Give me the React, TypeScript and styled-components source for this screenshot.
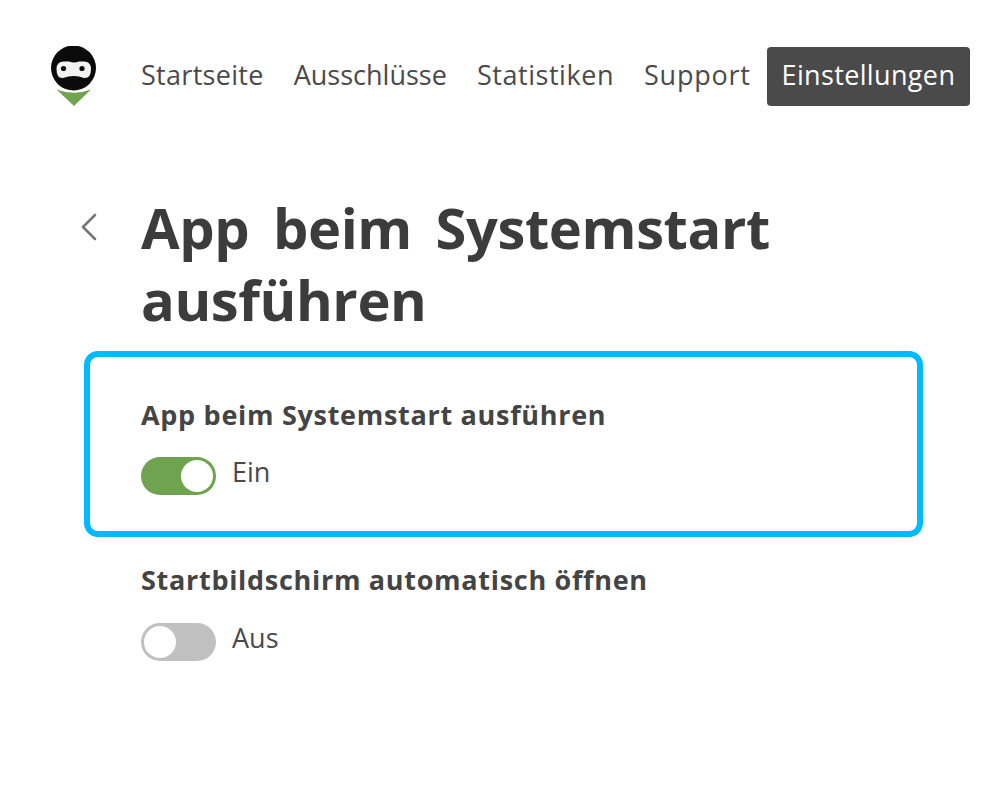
import React from "react";
import styled, { createGlobalStyle } from "styled-components";

const GlobalStyle = createGlobalStyle`
  html, body {
    margin: 0;
    padding: 0;
    background: #fff;
  }
  body {
    font-family: "Open Sans", "Noto Sans", sans-serif;
    color: #444;
  }
`;

const Page = styled.div`
  width: 1008px;
  height: 791px;
  overflow: hidden;
  box-sizing: border-box;
  padding: 46px 0 0 50px;
`;

const Header = styled.header`
  display: flex;
  align-items: center;
  height: 60px;
`;

const LogoSlot = styled.div`
  width: 48px;
  height: 60px;
  margin-right: 43px;
  flex-shrink: 0;
`;

const Nav = styled.nav`
  display: flex;
  align-items: center;
  gap: 30px;
`;

const NavLink = styled.a<{ $active?: boolean; $tracking: number }>`
  font-size: 27px;
  letter-spacing: ${(p) => p.$tracking}px;
  line-height: 56px;
  height: 59px;
  white-space: nowrap;
  color: ${(p) => (p.$active ? "#fff" : "#4a4a4a")};
  background: ${(p) => (p.$active ? "#4a4a4a" : "transparent")};
  border-radius: 4px;
  padding: ${(p) => (p.$active ? "0 15px" : "0")};
  margin-left: ${(p) => (p.$active ? "-14px" : "0")};
`;

const TitleRow = styled.div`
  display: flex;
  align-items: flex-start;
  margin-top: 85px;
`;

const BackButton = styled.button`
  width: 91px;
  height: 72px;
  flex-shrink: 0;
  border: 0;
  padding: 0 0 0 30px;
  background: none;
  display: flex;
  align-items: center;
`;

const Title = styled.h1`
  margin: 0;
  width: 720px;
  font-size: 56px;
  line-height: 72px;
  font-weight: 700;
  letter-spacing: -0.4px;
  word-spacing: 9.5px;
  color: #3c3c3c;
`;

const Highlight = styled.section`
  box-sizing: border-box;
  width: 839px;
  height: 186px;
  margin: 16px 0 0 34px;
  border: 6px solid #00bbff;
  border-radius: 14px;
  padding: 41px 0 0 51px;
`;

const SettingLabel = styled.div`
  font-size: 27px;
  line-height: 34px;
  font-weight: 700;
  letter-spacing: 0.7px;
  color: #444;
`;

const ToggleRow = styled.div`
  display: flex;
  align-items: center;
  gap: 16px;
  margin-top: 23px;
`;

const PlainSetting = styled.section`
  margin: 26px 0 0 91px;

  ${ToggleRow} {
    margin-top: 24px;
  }
`;

const Track = styled.div<{ $on: boolean }>`
  box-sizing: border-box;
  width: 75px;
  height: 38px;
  border-radius: 19px;
  padding: 3px;
  display: flex;
  justify-content: ${(p) => (p.$on ? "flex-end" : "flex-start")};
  background: ${(p) => (p.$on ? "#70a350" : "#c0c0c0")};
`;

const Knob = styled.div`
  width: 32px;
  height: 32px;
  border-radius: 50%;
  background: #fff;
`;

const ToggleText = styled.span`
  font-size: 27px;
  line-height: 34px;
  padding-bottom: 7px;
  color: #4a4a4a;
`;

const Logo = () => (
  <svg width="48" height="60" viewBox="0 0 48 60">
    <path d="M6.5 43.5 Q24 50 41 43.5 L24 60 Z" fill="#70a54f" />
    <circle cx="23.5" cy="22" r="22.5" fill="#0b0b0b" />
    <path
      d="M6.5 23 Q6.5 15.5 14 15.5 L19 15.5 Q24 17.5 29 15.5 L34 15.5 Q41 15.5 41 23 Q41 32.5 34 32 Q24 28 13 32 Q6.5 32.5 6.5 23 Z"
      fill="#f2f2f2"
    />
    <circle cx="13.5" cy="22.5" r="2.6" fill="#0b0b0b" />
    <circle cx="32" cy="22.5" r="2.6" fill="#0b0b0b" />
  </svg>
);

const BackIcon = () => (
  <svg width="18" height="28" viewBox="0 0 18 28">
    <path d="M15 2 L3 14 L15 26" fill="none" stroke="#777" strokeWidth="2.6" strokeLinecap="round" strokeLinejoin="round" />
  </svg>
);

const Toggle: React.FC<{ on: boolean; label: string }> = ({ on, label }) => (
  <ToggleRow>
    <Track $on={on}>
      <Knob />
    </Track>
    <ToggleText>{label}</ToggleText>
  </ToggleRow>
);

const App: React.FC = () => {
  return (
    <Page>
      <GlobalStyle />
      <Header>
        <LogoSlot>
          <Logo />
        </LogoSlot>
        <Nav>
          <NavLink $tracking={0.3}>Startseite</NavLink>
          <NavLink $tracking={0}>Ausschlüsse</NavLink>
          <NavLink $tracking={0.55}>Statistiken</NavLink>
          <NavLink $tracking={0.75}>Support</NavLink>
          <NavLink $active $tracking={0.35}>
            Einstellungen
          </NavLink>
        </Nav>
      </Header>
      <TitleRow>
        <BackButton aria-label="Zurück">
          <BackIcon />
        </BackButton>
        <Title>App beim Systemstart ausführen</Title>
      </TitleRow>
      <Highlight>
        <SettingLabel>App beim Systemstart ausführen</SettingLabel>
        <Toggle on label="Ein" />
      </Highlight>
      <PlainSetting>
        <SettingLabel>Startbildschirm automatisch öffnen</SettingLabel>
        <Toggle on={false} label="Aus" />
      </PlainSetting>
    </Page>
  );
};

export default App;
